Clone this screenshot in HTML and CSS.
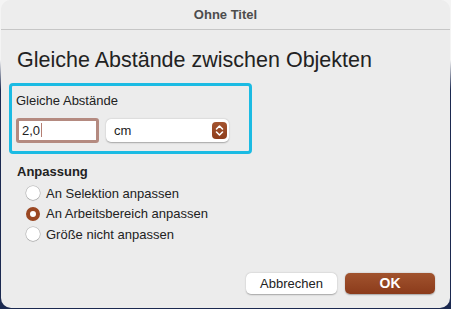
FILE: index.html
```html
<!doctype html>
<html>
  <head>
    <title>Ohne Titel</title>
    <link rel="stylesheet" href="styles.css">
  </head>
  <body>
    <div class="window">
      <div class="titlebar">Ohne Titel</div>
      <div class="content">
        <h1>Gleiche Abstände zwischen Objekten</h1>
        <div class="group">
          <div class="label">Gleiche Abstände</div>
          <div class="row">
            <div class="field">2,0<span class="caret"></span></div>
            <div class="select">
              <span>cm</span>
              <span class="stepper">
                <svg width="9" height="13" viewBox="0 0 9 13">
                  <path d="M1.5 5 L4.5 2 L7.5 5 M1.5 8 L4.5 11 L7.5 8" fill="none" stroke="#fff" stroke-width="1.6" stroke-linecap="round" stroke-linejoin="round"/>
                </svg>
              </span>
            </div>
          </div>
        </div>
        <div class="section">Anpassung</div>
        <div class="radios">
          <label class="radio"><span class="dot"></span>An Selektion anpassen</label>
          <label class="radio"><span class="dot on"></span>An Arbeitsbereich anpassen</label>
          <label class="radio"><span class="dot"></span>Größe nicht anpassen</label>
        </div>
        <div class="buttons">
          <button class="btn">Abbrechen</button>
          <button class="btn primary">OK</button>
        </div>
      </div>
    </div>
  </body>
</html>
```

FILE: styles.css
```css
html, body {
  margin: 0;
  height: 309px;
  overflow: hidden;
}
body {
  background: linear-gradient(#f4f4f4 0, #f4f4f4 60px, #1b2950 90px);
  font-family: "Liberation Sans", Arial, sans-serif;
  color: #222;
}
.window {
  margin-left: 1px;
  width: 449px;
  height: 308px;
  background: #ececec;
  border-radius: 10px;
  overflow: hidden;
}
.titlebar {
  height: 29px;
  line-height: 29px;
  border-bottom: 1px solid #c6c6c6;
  text-align: center;
  font-size: 13px;
  font-weight: bold;
  color: #4c4c4c;
  background: #ededed;
}
.content {
  padding: 0 15px 0 16px;
}
h1 {
  margin: 17px 0 0;
  font-size: 21.5px;
  font-weight: normal;
  line-height: 26px;
  color: #222;
}
.group {
  margin: 10px 0 0 -8px;
  width: 233px;
  height: 65px;
  border: 3px solid #1bbbe3;
  border-radius: 4px;
  padding-left: 4px;
}
.label {
  margin-top: 7px;
  font-size: 13px;
  line-height: 16px;
}
.row {
  display: flex;
  gap: 7px;
  margin-top: 9px;
}
.field {
  width: 74px;
  height: 19px;
  border: 3px solid #b48a80;
  border-radius: 3px;
  background: #fff;
  font-size: 13px;
  line-height: 19px;
  padding-left: 3px;
  box-sizing: content-box;
}
.caret {
  display: inline-block;
  width: 1px;
  height: 14px;
  background: #b47e72;
  vertical-align: -2px;
  margin-left: 1px;
}
.select {
  margin-top: 1px;
  width: 123px;
  height: 23px;
  background: #fff;
  border-radius: 5px;
  box-shadow: 0 0.5px 1.5px rgba(0,0,0,.3);
  display: flex;
  align-items: center;
  justify-content: space-between;
  padding: 0 2px 0 8px;
  box-sizing: border-box;
  font-size: 13px;
}
.stepper {
  width: 15px;
  height: 17px;
  border-radius: 4px;
  background: linear-gradient(#a4542f, #8e3d1c);
  display: flex;
  align-items: center;
  justify-content: center;
}
.section {
  margin-top: 10px;
  font-size: 13px;
  font-weight: bold;
  line-height: 16px;
}
.radios {
  margin-top: 3px;
  padding-left: 9px;
}
.radio {
  display: flex;
  align-items: center;
  gap: 6px;
  height: 20.5px;
  font-size: 13px;
}
.dot {
  width: 14px;
  height: 14px;
  border-radius: 50%;
  background: #fff;
  box-shadow: 0 0 0 0.5px rgba(0,0,0,.25), 0 0.5px 1px rgba(0,0,0,.2);
  box-sizing: border-box;
}
.dot.on {
  border: 4.5px solid #9a4722;
  background: #fff;
  box-shadow: none;
}
.buttons {
  display: flex;
  justify-content: flex-end;
  gap: 8px;
  margin-top: 28px;
}
.btn {
  width: 91px;
  height: 21px;
  border: none;
  border-radius: 5px;
  background: #fff;
  box-shadow: 0 0.5px 1.5px rgba(0,0,0,.3);
  font-family: "Liberation Sans", Arial, sans-serif;
  font-size: 13px;
  color: #222;
  padding: 0;
}
.btn.primary {
  width: 90px;
  background: linear-gradient(#a1532e, #8b3b1b);
  color: #fff;
  font-weight: bold;
  font-size: 14px;
}
```
